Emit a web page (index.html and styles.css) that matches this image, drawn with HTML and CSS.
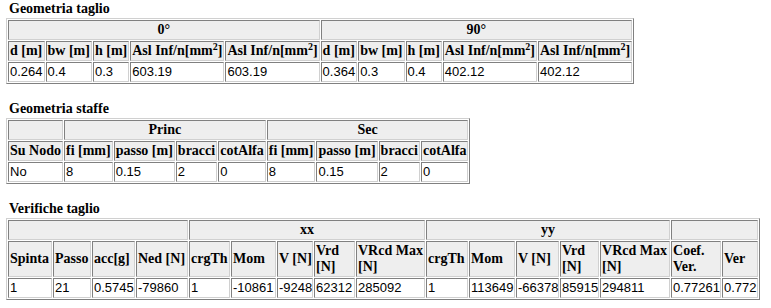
FILE: index.html
```html
<!DOCTYPE html>
<html lang="it">
<head>
  <meta charset="UTF-8" />
  <title>Verifica taglio</title>
  <link rel="stylesheet" href="styles.css">
</head>
<body>

  <div class="page">
    <!-- Geometria -->
    <div class="section">
      <div class="title">Geometria taglio</div>
      <table class="grid">
        <tr>
          <th colspan="5">0°</th>
          <th colspan="5">90°</th>
        </tr>
        <tr>
          <th>d [m]</th><th>bw [m]</th><th>h [m]</th><th>Asl Inf/n[mm<sup>2</sup>]</th><th>Asl Inf/n[mm<sup>2</sup>]</th>
          <th>d [m]</th><th>bw [m]</th><th>h [m]</th><th>Asl Inf/n[mm<sup>2</sup>]</th><th>Asl Inf/n[mm<sup>2</sup>]</th>
        </tr>
        <tr>
          <td>0.264</td><td>0.4</td><td>0.3</td><td>603.19</td><td>603.19</td>
          <td>0.364</td><td>0.3</td><td>0.4</td><td>402.12</td><td>402.12</td>
        </tr>
      </table>
    </div>

    <!-- Staffe -->
    <div class="section">
      <div class="title">Geometria staffe</div>
      <table class="grid">
        <tr>
          <th></th>
          <th colspan="4">Princ</th>
          <th colspan="4">Sec</th>
        </tr>
        <tr>
          <th>Su Nodo</th>
          <th>fi [mm]</th><th>passo [m]</th><th>bracci</th><th>cotAlfa</th>
          <th>fi [mm]</th><th>passo [m]</th><th>bracci</th><th>cotAlfa</th>
        </tr>
        <tr>
          <td>No</td>
          <td>8</td><td>0.15</td><td>2</td><td>0</td>
          <td>8</td><td>0.15</td><td>2</td><td>0</td>
        </tr>
      </table>
    </div>

    <!-- Verifiche -->
    <div class="section">
      <div class="title">Verifiche taglio</div>
      <table class="grid wide">
        <colgroup>
          <col style="width: 44px"><col style="width: 38px"><col style="width: 43px"><col style="width: 52px">
          <col style="width: 41px"><col style="width: 45px"><col style="width: 36px"><col style="width: 41px"><col style="width: 69px">
          <col style="width: 42px"><col style="width: 46px"><col style="width: 43px"><col style="width: 39px"><col style="width: 70px">
          <col style="width: 50px"><col style="width: 36px">
        </colgroup>
        <tr>
          <th colspan="4"></th>
          <th colspan="5">xx</th>
          <th colspan="5">yy</th>
          <th colspan="2"></th>
        </tr>
        <tr>
          <th>Spinta</th><th>Passo</th><th>acc[g]</th><th>Ned [N]</th>
          <th>crgTh</th><th>Mom</th><th>V [N]</th><th>Vrd<br>[N]</th><th>VRcd Max<br>[N]</th>
          <th>crgTh</th><th>Mom</th><th>V [N]</th><th>Vrd<br>[N]</th><th>VRcd Max<br>[N]</th>
          <th>Coef.<br>Ver.</th><th>Ver</th>
        </tr>
        <tr>
          <td>1</td><td>21</td><td>0.5745</td><td>-79860</td>
          <td>1</td><td>-10861</td><td>-9248</td><td>62312</td><td>285092</td>
          <td>1</td><td>113649</td><td>-66378</td><td>85915</td><td>294811</td>
          <td>0.77261</td><td>0.772</td>
        </tr>
      </table>
    </div>
  </div>

</body>
</html>
```

FILE: styles.css
```css
body {
  margin: 0;
  padding: 0;
  background: #ffffff;
  color: #000000;
  font-family: "Liberation Serif", "Times New Roman", serif;
}

.page {
  width: 754px;
  margin: 1px 0 0 6px;
}

.section {
  margin-bottom: 17px;
}

.title {
  font-weight: bold;
  font-size: 14px;
  line-height: 16px;
  padding-left: 3px;
  margin-bottom: 1px;
}

.grid {
  border-collapse: separate;
  border-spacing: 1px;
  border: 1px solid;
  border-color: #d0d0d0 #808080 #808080 #d0d0d0;
}

.grid.wide {
  width: 100%;
  table-layout: fixed;
}

.grid th,
.grid td {
  border: 1px solid;
  border-color: #808080 #d0d0d0 #d0d0d0 #808080;
  padding: 1px;
  line-height: 16px;
  white-space: nowrap;
}

.grid th {
  background: #eeeeee;
  font-weight: bold;
  font-size: 14px;
  text-align: left;
}

.grid tr:first-child th {
  text-align: center;
}

.grid td {
  font-family: Tahoma, "Liberation Sans", Arial, sans-serif;
  font-size: 13px;
  text-align: left;
}

.grid sup {
  font-size: 10px;
  line-height: 0;
  vertical-align: 5px;
}
```
